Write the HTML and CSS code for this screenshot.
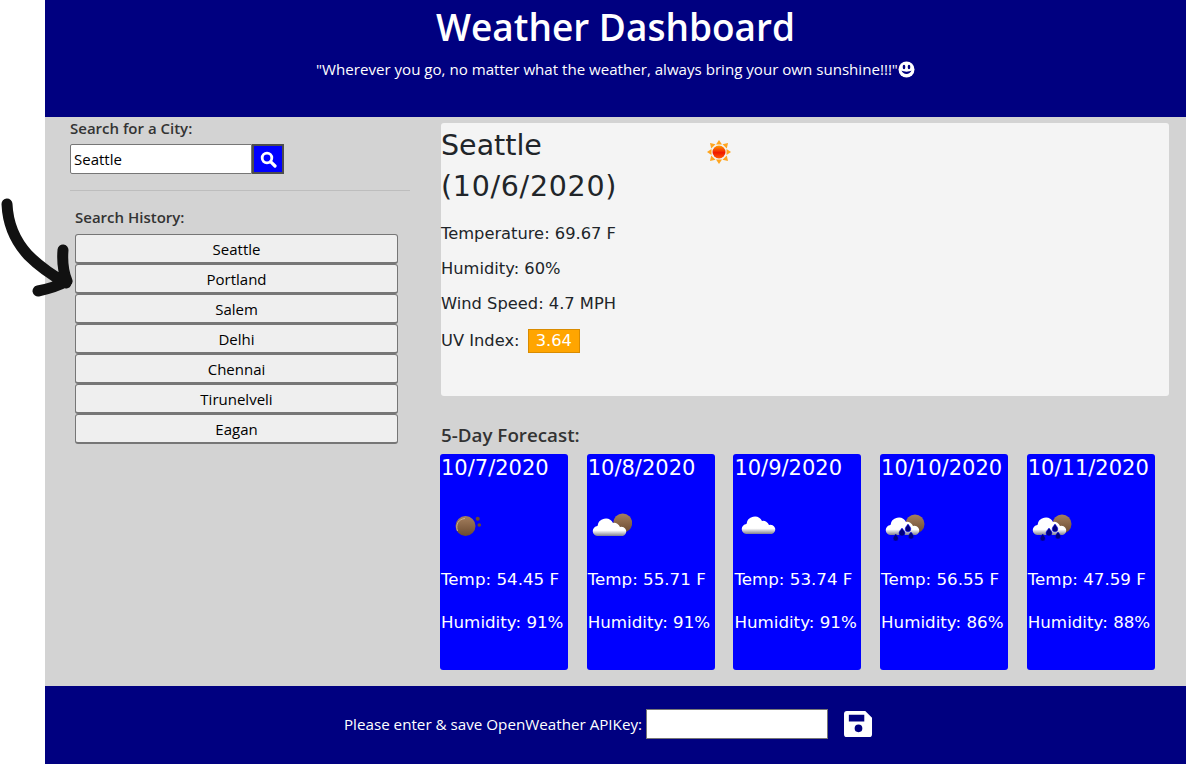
FILE: index.html
```html
<!DOCTYPE html>
<html lang="en">
<head>
<meta charset="utf-8">
<title>Weather Dashboard</title>
<link rel="stylesheet" href="styles.css">
</head>
<body>
<svg class="arrow" width="75" height="100" viewBox="0 0 75 100" aria-hidden="true">
  <path d="M7 6C8 30 17 45 28 57C39 68 50 76 66 85M63 52C62 64 63 73 67 83C58 88 48 91 38 93" fill="none" stroke="#111" stroke-width="11" stroke-linecap="round" stroke-linejoin="round"/>
</svg>
<svg class="defs" width="0" height="0" aria-hidden="true">
  <defs>
    <linearGradient id="moon" x1="0" y1="0" x2="0" y2="1"><stop offset="0" stop-color="#a5805f"/><stop offset="1" stop-color="#6a4a30"/></linearGradient>
    <linearGradient id="cloud" x1="0" y1="0" x2="0" y2="1"><stop offset="0" stop-color="#fff"/><stop offset=".68" stop-color="#fff"/><stop offset="1" stop-color="#80808f"/></linearGradient>
    <path id="cloud-shape" d="M5 19A5 5 0 0 1 4.500 9A8.200 8.200 0 0 1 20 6A6 6 0 0 1 27 10A4.600 4.600 0 0 1 30 19Z" fill="url(#cloud)"/>
    <g id="drops" fill="#000080" stroke="#0000ff" stroke-width=".5">
      <path d="M27 16c2 2.500 2.800 3.700 2.800 5a2.800 2.800 0 0 1-5.600 0c0-1.300.8-2.500 2.800-5z"/>
      <path d="M21 20c2 2.500 3 3.700 3 5a3 3 0 0 1-6 0c0-1.300 1-2.500 3-5z"/>
      <path d="M30 24c1.600 2 2.600 3.200 2.600 4.400a2.600 2.600 0 0 1-5.200 0c0-1.200 1-2.400 2.600-4.400z"/>
      <path d="M14.700 26c1.600 2 2.600 3.200 2.600 4.400a2.600 2.600 0 0 1-5.200 0c0-1.200 1-2.400 2.600-4.400z"/>
    </g>
  </defs>
</svg>
<div class="page">
  <header class="header">
    <h1 class="title">Weather Dashboard</h1>
    <p class="quote">"Wherever you go, no matter what the weather, always bring your own sunshine!!!"<svg class="smile" width="17" height="17" viewBox="0 0 17 17" aria-hidden="true"><circle cx="8.500" cy="8.500" r="8" fill="#fff"/><ellipse cx="6" cy="6" rx="1.300" ry="2.200" fill="#000080"/><ellipse cx="11" cy="6" rx="1.300" ry="2.200" fill="#000080"/><path d="M3.500 9.500C5 14 12 14 13.500 9.500C11 11 6 11 3.500 9.500Z" fill="#000080"/></svg></p>
  </header>
  <main class="main">
    <aside class="sidebar">
      <label class="label" for="city">Search for a City:</label>
      <div class="search">
        <input class="city-input" id="city" type="text" value="Seattle">
        <button class="search-btn" type="button" aria-label="Search">
          <svg width="17" height="17" viewBox="0 0 17 17" aria-hidden="true"><circle cx="7" cy="7" r="4.800" fill="none" stroke="#fff" stroke-width="2.800"/><path d="M10.800 10.800L15 15" stroke="#fff" stroke-width="3.200" stroke-linecap="round"/></svg>
        </button>
      </div>
      <hr class="rule">
      <div class="history">
        <h2 class="label">Search History:</h2>
        <button class="city-btn" type="button">Seattle</button>
        <button class="city-btn" type="button">Portland</button>
        <button class="city-btn" type="button">Salem</button>
        <button class="city-btn" type="button">Delhi</button>
        <button class="city-btn" type="button">Chennai</button>
        <button class="city-btn" type="button">Tirunelveli</button>
        <button class="city-btn" type="button">Eagan</button>
      </div>
    </aside>
    <section class="content">
      <div class="current">
        <div class="current-head">
          <h2 class="city-name">Seattle<br><span class="city-date">(10/6/2020)</span></h2>
          <svg class="sun" width="26" height="26" viewBox="0 0 26 26" aria-hidden="true">
            <defs><linearGradient id="sunfill" x1="0" y1="0" x2="0" y2="1"><stop offset="0" stop-color="#ff9a00"/><stop offset=".55" stop-color="#f01800"/><stop offset="1" stop-color="#ff5a00"/></linearGradient></defs>
            <g fill="#ffa51e"><path d="M13 1l3 4.500h-6z"/><path d="M13 25l3-4.500h-6z"/><path d="M1 13l4.500 3v-6z"/><path d="M25 13l-4.500 3v-6z"/><path d="M4 4l5.500 1.200-4.300 4.300z"/><path d="M22 4l-5.500 1.200 4.300 4.300z"/><path d="M4 22l5.500-1.200-4.300-4.300z"/><path d="M22 22l-5.500-1.200 4.300-4.300z"/></g>
            <circle cx="13" cy="13" r="6.500" fill="url(#sunfill)"/>
          </svg>
        </div>
        <p class="stat">Temperature: 69.67 F</p>
        <p class="stat">Humidity: 60%</p>
        <p class="stat">Wind Speed: 4.7 MPH</p>
        <p class="stat uv">UV Index: <span class="uv-badge">3.64</span></p>
      </div>
      <h2 class="forecast-title">5-Day Forecast:</h2>
      <div class="forecast">
        <article class="day">
          <h3 class="day-date">10/7/2020</h3>
          <svg class="wx" width="44" height="36" viewBox="0 0 44 36" aria-hidden="true">
            <circle cx="24.500" cy="18" r="10" fill="url(#moon)"/><path d="M16.500 23C14 16 18 11 24 10.500" fill="none" stroke="#c9ad90"/>
            <circle cx="36.700" cy="10.700" r="2" fill="#6a4a30"/><circle cx="38.300" cy="17" r="1.800" fill="#6a4a30"/>
          </svg>
          <p class="day-stat">Temp: 54.45 F</p>
          <p class="day-stat">Humidity: 91%</p>
        </article>
        <article class="day">
          <h3 class="day-date">10/8/2020</h3>
          <svg class="wx" width="44" height="36" viewBox="0 0 44 36" aria-hidden="true">
            <circle cx="34.700" cy="15" r="9.500" fill="url(#moon)"/>
            <use href="#cloud-shape" x="5" y="9"/>
          </svg>
          <p class="day-stat">Temp: 55.71 F</p>
          <p class="day-stat">Humidity: 91%</p>
        </article>
        <article class="day">
          <h3 class="day-date">10/9/2020</h3>
          <svg class="wx" width="44" height="36" viewBox="0 0 44 36" aria-hidden="true">
            <use href="#cloud-shape" x="8" y="7"/>
          </svg>
          <p class="day-stat">Temp: 53.74 F</p>
          <p class="day-stat">Humidity: 91%</p>
        </article>
        <article class="day">
          <h3 class="day-date">10/10/2020</h3>
          <svg class="wx" width="44" height="36" viewBox="0 0 44 36" aria-hidden="true">
            <circle cx="34" cy="16" r="9.500" fill="url(#moon)"/>
            <use href="#cloud-shape" x="5" y="8"/>
            <use href="#drops"/>
          </svg>
          <p class="day-stat">Temp: 56.55 F</p>
          <p class="day-stat">Humidity: 86%</p>
        </article>
        <article class="day">
          <h3 class="day-date">10/11/2020</h3>
          <svg class="wx" width="44" height="36" viewBox="0 0 44 36" aria-hidden="true">
            <circle cx="34" cy="16" r="9.500" fill="url(#moon)"/>
            <use href="#cloud-shape" x="5" y="8"/>
            <use href="#drops"/>
          </svg>
          <p class="day-stat">Temp: 47.59 F</p>
          <p class="day-stat">Humidity: 88%</p>
        </article>
      </div>
    </section>
  </main>
  <footer class="footer">
    <label class="api-label" for="api">Please enter &amp; save OpenWeather APIKey:</label>
    <input class="api-input" id="api" type="text">
    <button class="save-btn" type="button" aria-label="Save">
      <svg width="29" height="28" viewBox="0 0 30 29" aria-hidden="true"><path fill-rule="evenodd" fill="#fff" d="M3 1H22L29 8V25A3 3 0 0 1 26 28H3A3 3 0 0 1 0 25V4A3 3 0 0 1 3 1ZM5 5V12H21V5ZM15 15A4 4 0 1 0 15 23A4 4 0 1 0 15 15Z"/></svg>
    </button>
  </footer>
</div>
</body>
</html>
```
FILE: styles.css
```css
* { box-sizing: border-box; }
html, body { margin: 0; padding: 0; background: #fff; }
body { height: 765px; overflow: hidden; position: relative; font-family: "Open Sans", "Liberation Sans", sans-serif; color: #212529; }
.arrow { position: absolute; left: 0; top: 198px; }
.defs { position: absolute; }
.page { margin-left: 45px; height: 764px; display: flex; flex-direction: column; }
.header { height: 117px; background: #000080; color: #fff; text-align: center; padding-top: 2px; flex: none; }
.title { margin: 0; font-size: 37px; line-height: 50px; font-weight: 600; }
.quote { margin: 5px 0 0; font-size: 15.100px; line-height: 24px; display: flex; justify-content: center; align-items: center; }
.main { flex: 1; background: #d3d3d3; display: flex; }
.sidebar { width: 396px; flex: none; padding: 0 31px 0 25px; }
.label { display: block; margin: 0; font-size: 15px; line-height: 22px; font-weight: 600; color: #333; }
.search { display: flex; margin-top: 5px; }
.city-input { width: 182px; height: 30px; border: 1px solid #767676; border-radius: 2px 0 0 2px; padding: 0 3px; font: 15px "Open Sans", sans-serif; color: #000; background: #fff; }
.search-btn { width: 32px; height: 30px; background: #0000ff; border: 2px solid #4d4d4d; padding: 0; display: flex; align-items: center; justify-content: center; }
.rule { border: 0; border-top: 1px solid #bdbdbd; margin: 16px 0 0; }
.history { margin: 15px 12px 0 5px; display: flex; flex-direction: column; }
.history .label { margin-bottom: 6px; }
.city-btn { height: 30px; border: 1px solid #767676; border-bottom-width: 2px; border-radius: 3px; background: #efefef; color: #000; font: 15px "Open Sans", sans-serif; padding: 0; }
.content { flex: 1; padding: 6px 17px 0 0; }
.current { background: #f4f4f4; border-radius: 3px; height: 273px; font-family: "DejaVu Sans", sans-serif; color: #212529; }
.current-head { display: flex; height: 94px; }
.city-name { width: 265px; margin: 0; padding-top: 2px; font-size: 28.500px; line-height: 41px; font-weight: 400; }
.city-date { letter-spacing: .7px; }
.sun { margin-top: 16px; }
.stat { margin: 0; font-size: 16.300px; line-height: 24px; height: 35px; padding-top: 5px; }
.uv { margin-top: 2px; }
.uv-badge { display: inline-block; background: #ffa500; border: 1px solid #d98b00; color: #fff; padding: 0 7px; line-height: 22px; margin-left: 3px; }
.forecast-title { margin: 27px 0 0; font-size: 18.800px; line-height: 25px; font-weight: 600; color: #333; }
.forecast { display: flex; gap: 18.700px; margin: 6px 0 0 -1px; }
.day { width: 128px; height: 216px; background: #0000ff; border-radius: 3px; color: #fff; font-family: "DejaVu Sans", sans-serif; padding-left: 1px; }
.day-date { margin: 0; font-size: 21px; line-height: 28px; font-weight: 400; white-space: nowrap; }
.wx { display: block; margin: 26px 0 0 0; }
.day-stat { margin: 0; font-size: 16.700px; line-height: 22px; height: 43px; white-space: nowrap; }
.wx + .day-stat { margin-top: 24px; }
.footer { height: 78px; flex: none; background: #000080; color: #fff; display: flex; align-items: center; justify-content: center; font-size: 15.200px; padding: 0 14px 3px 0; }
.api-label { margin-right: 4px; }
.api-input { width: 182px; height: 30px; background: #fff; border: 1px solid #767676; }
.save-btn { background: none; border: 0; padding: 0; margin-left: 16px; display: flex; }
```
